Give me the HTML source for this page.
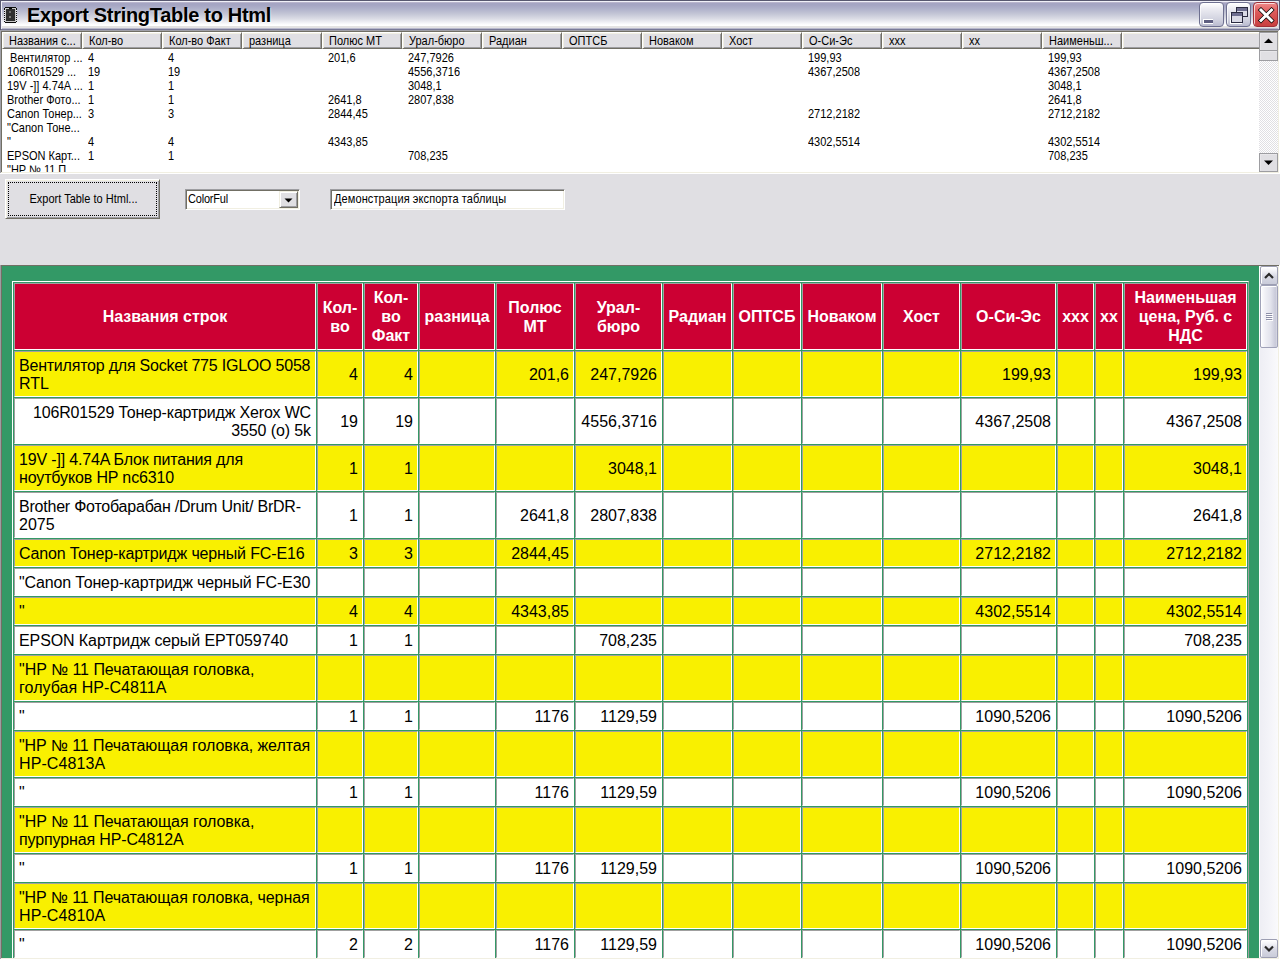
<!DOCTYPE html><html><head><meta charset="utf-8"><title>Export StringTable to Html</title><style>
*{box-sizing:border-box;margin:0;padding:0}
html,body{width:1280px;height:960px;overflow:hidden;background:#e0dfe3;font-family:"Liberation Sans",sans-serif;position:relative}
.a{position:absolute}
.t{font-size:11px;line-height:14px;color:#000;white-space:nowrap}
.lv{transform:scaleY(1.12);transform-origin:0 10px;margin-top:1px}
/* table */
.c{position:absolute;border-style:solid;border-width:1px;border-color:#a0a0a0 #ffffff #ffffff #a0a0a0;font-size:16px;line-height:18px;color:#000;white-space:nowrap;display:flex;align-items:center;padding:0 4px;}
.h{background:#cc0033;color:#fff;font-weight:bold;line-height:19px;justify-content:center;text-align:center}
.r{justify-content:flex-end;text-align:right}
</style></head><body>
<div class="a" style="left:0;top:0;width:1280px;height:30px;background:linear-gradient(#a5a5c3 0px,#a5a5c3 5px,#b0b2cb 9px,#c4c6d6 14px,#dcdde6 19px,#f4f4f8 23px,#ffffff 25px,#ffffff 26px,#e4e3e3 26px,#e4e3e3 28px,#b8b8cc 28px,#b8b8cc 29px,#7a7a98 29px);"></div>
<div class="a" style="left:0;top:0;width:1280px;height:1px;background:#585870"></div>
<div class="a" style="left:0;top:1px;width:1280px;height:1px;background:#f0f0f8"></div>
<div class="a" style="left:0;top:2px;width:1280px;height:1px;background:#b8b4cc"></div>
<div class="a" style="left:0;top:0;width:1px;height:30px;background:#585870"></div>
<div class="a" style="left:1px;top:1px;width:1px;height:28px;background:#f0f0f8"></div>
<div class="a" style="left:1279px;top:0;width:1px;height:30px;background:#585870"></div>
<div class="a" style="left:1278px;top:1px;width:1px;height:28px;background:#d8d8e4"></div>
<div class="a" style="left:4px;top:7px;width:13px;height:16px;"><svg width="13" height="16" viewBox="0 0 13 16"><path d="M1 0 H12 V1 H13 V15 H12 V16 H1 V15 H0 V1 H1 Z" fill="#0a0a0a"/><rect x="1" y="1" width="11" height="14" fill="#c8c8c8"/><rect x="2" y="2" width="9" height="12" fill="#2e2e2e"/><rect x="5" y="1" width="3" height="1" fill="#0a0a0a"/><rect x="5" y="4" width="2" height="2" fill="#6a6a6a"/><rect x="5" y="9" width="2" height="2" fill="#7a7a7a"/><rect x="0" y="3" width="1" height="1" fill="#e8e8f0"/><rect x="12" y="3" width="1" height="1" fill="#e8e8f0"/><rect x="0" y="5" width="1" height="1" fill="#e8e8f0"/><rect x="12" y="5" width="1" height="1" fill="#e8e8f0"/><rect x="0" y="7" width="1" height="1" fill="#e8e8f0"/><rect x="12" y="7" width="1" height="1" fill="#e8e8f0"/><rect x="0" y="9" width="1" height="1" fill="#e8e8f0"/><rect x="12" y="9" width="1" height="1" fill="#e8e8f0"/><rect x="0" y="11" width="1" height="1" fill="#e8e8f0"/><rect x="12" y="11" width="1" height="1" fill="#e8e8f0"/><rect x="0" y="13" width="1" height="1" fill="#e8e8f0"/><rect x="12" y="13" width="1" height="1" fill="#e8e8f0"/></svg></div>
<div class="a" style="left:27px;top:3px;font-size:20px;line-height:24px;font-weight:bold;color:#000;white-space:nowrap;letter-spacing:-0.3px;text-shadow:1px 1px 0 rgba(255,255,255,0.5)">Export StringTable to Html</div>
<div class="a" style="left:1199px;top:2px;width:25px;height:25px;border:1px solid #6e7090;border-radius:4px;background:linear-gradient(#ffffff,#ececf2 25%,#cfd0de 75%,#babbcf);overflow:hidden;box-shadow:inset 1px 1px 0 rgba(255,255,255,0.7)"><div class="a" style="left:3px;top:16px;width:10px;height:5px;background:#fff"></div><div class="a" style="left:4px;top:17px;width:9px;height:3px;background:#5e5e80"></div></div>
<div class="a" style="left:1226px;top:2px;width:25px;height:25px;border:1px solid #6e7090;border-radius:4px;background:linear-gradient(#ffffff,#ececf2 25%,#cfd0de 75%,#babbcf);overflow:hidden;box-shadow:inset 1px 1px 0 rgba(255,255,255,0.7)"><svg class="a" style="left:2px;top:2px" width="20" height="20"><rect x="7" y="2" width="12" height="10" fill="#2a2a40"/><rect x="8" y="5" width="10" height="6" fill="#dadae6"/><rect x="8" y="3" width="10" height="3" fill="#6e6e90"/><rect x="1" y="8" width="12" height="11" fill="#fff"/><rect x="2" y="7" width="12" height="11" fill="#2a2a40"/><rect x="3" y="10" width="10" height="7" fill="#dadae6"/><rect x="3" y="8" width="10" height="3" fill="#6e6e90"/></svg></div>
<div class="a" style="left:1253px;top:2px;width:25px;height:25px;border:1px solid #a03038;border-radius:4px;background:linear-gradient(#f08a8a,#dc5a5a 40%,#d04848 80%,#c84040);overflow:hidden;box-shadow:inset 1px 1px 0 rgba(255,255,255,0.7)"><svg class="a" style="left:2px;top:2px" width="20" height="20"><path d="M5 5 L15.5 15.5 M15.5 5 L5 15.5" stroke="#000" stroke-width="4.4" stroke-linecap="square"/><path d="M5 5 L15.5 15.5 M15.5 5 L5 15.5" stroke="#fff" stroke-width="3" stroke-linecap="square"/></svg></div>
<div class="a" style="left:0;top:30px;width:1280px;height:144px;background:#fff"></div>
<div class="a" style="left:0;top:30px;width:1280px;height:1px;background:#a0a0a8"></div>
<div class="a" style="left:1px;top:31px;width:1278px;height:1px;background:#716f64"></div>
<div class="a" style="left:0;top:30px;width:1px;height:144px;background:#a0a0a8"></div>
<div class="a" style="left:1px;top:31px;width:1px;height:142px;background:#716f64"></div>
<div class="a" style="left:0;top:173px;width:1280px;height:1px;background:#ffffff"></div>
<div class="a" style="left:1px;top:172px;width:1278px;height:1px;background:#f1efe2"></div>
<div class="a" style="left:1279px;top:30px;width:1px;height:144px;background:#fff"></div>
<div class="a" style="left:1278px;top:31px;width:1px;height:142px;background:#f1efe2"></div>
<div class="a" style="left:2px;top:32px;width:80px;height:17px;background:#e0dfe3;border-style:solid;border-width:1px 1px 1px 1px;border-color:#fff #716f64 #716f64 #fff;box-shadow:inset 1px 1px 0 #f1efe2, inset -1px -1px 0 #9d9da1"></div>
<div class="a t lv" style="left:9px;top:33px">Названия с...</div>
<div class="a" style="left:82px;top:32px;width:80px;height:17px;background:#e0dfe3;border-style:solid;border-width:1px 1px 1px 1px;border-color:#fff #716f64 #716f64 #fff;box-shadow:inset 1px 1px 0 #f1efe2, inset -1px -1px 0 #9d9da1"></div>
<div class="a t lv" style="left:89px;top:33px">Кол-во</div>
<div class="a" style="left:162px;top:32px;width:80px;height:17px;background:#e0dfe3;border-style:solid;border-width:1px 1px 1px 1px;border-color:#fff #716f64 #716f64 #fff;box-shadow:inset 1px 1px 0 #f1efe2, inset -1px -1px 0 #9d9da1"></div>
<div class="a t lv" style="left:169px;top:33px">Кол-во Факт</div>
<div class="a" style="left:242px;top:32px;width:80px;height:17px;background:#e0dfe3;border-style:solid;border-width:1px 1px 1px 1px;border-color:#fff #716f64 #716f64 #fff;box-shadow:inset 1px 1px 0 #f1efe2, inset -1px -1px 0 #9d9da1"></div>
<div class="a t lv" style="left:249px;top:33px">разница</div>
<div class="a" style="left:322px;top:32px;width:80px;height:17px;background:#e0dfe3;border-style:solid;border-width:1px 1px 1px 1px;border-color:#fff #716f64 #716f64 #fff;box-shadow:inset 1px 1px 0 #f1efe2, inset -1px -1px 0 #9d9da1"></div>
<div class="a t lv" style="left:329px;top:33px">Полюс МТ</div>
<div class="a" style="left:402px;top:32px;width:80px;height:17px;background:#e0dfe3;border-style:solid;border-width:1px 1px 1px 1px;border-color:#fff #716f64 #716f64 #fff;box-shadow:inset 1px 1px 0 #f1efe2, inset -1px -1px 0 #9d9da1"></div>
<div class="a t lv" style="left:409px;top:33px">Урал-бюро</div>
<div class="a" style="left:482px;top:32px;width:80px;height:17px;background:#e0dfe3;border-style:solid;border-width:1px 1px 1px 1px;border-color:#fff #716f64 #716f64 #fff;box-shadow:inset 1px 1px 0 #f1efe2, inset -1px -1px 0 #9d9da1"></div>
<div class="a t lv" style="left:489px;top:33px">Радиан</div>
<div class="a" style="left:562px;top:32px;width:80px;height:17px;background:#e0dfe3;border-style:solid;border-width:1px 1px 1px 1px;border-color:#fff #716f64 #716f64 #fff;box-shadow:inset 1px 1px 0 #f1efe2, inset -1px -1px 0 #9d9da1"></div>
<div class="a t lv" style="left:569px;top:33px">ОПТСБ</div>
<div class="a" style="left:642px;top:32px;width:80px;height:17px;background:#e0dfe3;border-style:solid;border-width:1px 1px 1px 1px;border-color:#fff #716f64 #716f64 #fff;box-shadow:inset 1px 1px 0 #f1efe2, inset -1px -1px 0 #9d9da1"></div>
<div class="a t lv" style="left:649px;top:33px">Новаком</div>
<div class="a" style="left:722px;top:32px;width:80px;height:17px;background:#e0dfe3;border-style:solid;border-width:1px 1px 1px 1px;border-color:#fff #716f64 #716f64 #fff;box-shadow:inset 1px 1px 0 #f1efe2, inset -1px -1px 0 #9d9da1"></div>
<div class="a t lv" style="left:729px;top:33px">Хост</div>
<div class="a" style="left:802px;top:32px;width:80px;height:17px;background:#e0dfe3;border-style:solid;border-width:1px 1px 1px 1px;border-color:#fff #716f64 #716f64 #fff;box-shadow:inset 1px 1px 0 #f1efe2, inset -1px -1px 0 #9d9da1"></div>
<div class="a t lv" style="left:809px;top:33px">О-Си-Эс</div>
<div class="a" style="left:882px;top:32px;width:80px;height:17px;background:#e0dfe3;border-style:solid;border-width:1px 1px 1px 1px;border-color:#fff #716f64 #716f64 #fff;box-shadow:inset 1px 1px 0 #f1efe2, inset -1px -1px 0 #9d9da1"></div>
<div class="a t lv" style="left:889px;top:33px">xxx</div>
<div class="a" style="left:962px;top:32px;width:80px;height:17px;background:#e0dfe3;border-style:solid;border-width:1px 1px 1px 1px;border-color:#fff #716f64 #716f64 #fff;box-shadow:inset 1px 1px 0 #f1efe2, inset -1px -1px 0 #9d9da1"></div>
<div class="a t lv" style="left:969px;top:33px">xx</div>
<div class="a" style="left:1042px;top:32px;width:80px;height:17px;background:#e0dfe3;border-style:solid;border-width:1px 1px 1px 1px;border-color:#fff #716f64 #716f64 #fff;box-shadow:inset 1px 1px 0 #f1efe2, inset -1px -1px 0 #9d9da1"></div>
<div class="a t lv" style="left:1049px;top:33px">Наименьш...</div>
<div class="a" style="left:1122px;top:32px;width:140px;height:17px;background:#e0dfe3;border-style:solid;border-width:1px 1px 1px 1px;border-color:#fff #716f64 #716f64 #fff;box-shadow:inset 1px 1px 0 #f1efe2, inset -1px -1px 0 #9d9da1"></div>
<div class="a" style="left:2px;top:49px;width:1257px;height:123px;overflow:hidden">
<div class="a t lv" style="left:5px;top:1px;white-space:pre"> Вентилятор ...</div>
<div class="a t lv" style="left:86px;top:1px;white-space:pre">4</div>
<div class="a t lv" style="left:166px;top:1px;white-space:pre">4</div>
<div class="a t lv" style="left:326px;top:1px;white-space:pre">201,6</div>
<div class="a t lv" style="left:406px;top:1px;white-space:pre">247,7926</div>
<div class="a t lv" style="left:806px;top:1px;white-space:pre">199,93</div>
<div class="a t lv" style="left:1046px;top:1px;white-space:pre">199,93</div>
<div class="a t lv" style="left:5px;top:15px;white-space:pre">106R01529 ...</div>
<div class="a t lv" style="left:86px;top:15px;white-space:pre">19</div>
<div class="a t lv" style="left:166px;top:15px;white-space:pre">19</div>
<div class="a t lv" style="left:406px;top:15px;white-space:pre">4556,3716</div>
<div class="a t lv" style="left:806px;top:15px;white-space:pre">4367,2508</div>
<div class="a t lv" style="left:1046px;top:15px;white-space:pre">4367,2508</div>
<div class="a t lv" style="left:5px;top:29px;white-space:pre">19V -]] 4.74A ...</div>
<div class="a t lv" style="left:86px;top:29px;white-space:pre">1</div>
<div class="a t lv" style="left:166px;top:29px;white-space:pre">1</div>
<div class="a t lv" style="left:406px;top:29px;white-space:pre">3048,1</div>
<div class="a t lv" style="left:1046px;top:29px;white-space:pre">3048,1</div>
<div class="a t lv" style="left:5px;top:43px;white-space:pre">Brother Фото...</div>
<div class="a t lv" style="left:86px;top:43px;white-space:pre">1</div>
<div class="a t lv" style="left:166px;top:43px;white-space:pre">1</div>
<div class="a t lv" style="left:326px;top:43px;white-space:pre">2641,8</div>
<div class="a t lv" style="left:406px;top:43px;white-space:pre">2807,838</div>
<div class="a t lv" style="left:1046px;top:43px;white-space:pre">2641,8</div>
<div class="a t lv" style="left:5px;top:57px;white-space:pre">Canon Тонер...</div>
<div class="a t lv" style="left:86px;top:57px;white-space:pre">3</div>
<div class="a t lv" style="left:166px;top:57px;white-space:pre">3</div>
<div class="a t lv" style="left:326px;top:57px;white-space:pre">2844,45</div>
<div class="a t lv" style="left:806px;top:57px;white-space:pre">2712,2182</div>
<div class="a t lv" style="left:1046px;top:57px;white-space:pre">2712,2182</div>
<div class="a t lv" style="left:5px;top:71px;white-space:pre">&quot;Canon Тоне...</div>
<div class="a t lv" style="left:5px;top:85px;white-space:pre">&quot;</div>
<div class="a t lv" style="left:86px;top:85px;white-space:pre">4</div>
<div class="a t lv" style="left:166px;top:85px;white-space:pre">4</div>
<div class="a t lv" style="left:326px;top:85px;white-space:pre">4343,85</div>
<div class="a t lv" style="left:806px;top:85px;white-space:pre">4302,5514</div>
<div class="a t lv" style="left:1046px;top:85px;white-space:pre">4302,5514</div>
<div class="a t lv" style="left:5px;top:99px;white-space:pre">EPSON Карт...</div>
<div class="a t lv" style="left:86px;top:99px;white-space:pre">1</div>
<div class="a t lv" style="left:166px;top:99px;white-space:pre">1</div>
<div class="a t lv" style="left:406px;top:99px;white-space:pre">708,235</div>
<div class="a t lv" style="left:1046px;top:99px;white-space:pre">708,235</div>
<div class="a t lv" style="left:5px;top:113px;white-space:pre">&quot;HP № 11 П</div>
</div>
<div class="a" style="left:1259px;top:32px;width:19px;height:140px;background-color:#f4f3ee;background-image:repeating-conic-gradient(#e0dfe3 0 25%, #ffffff 0 50%);background-size:2px 2px"></div>
<div class="a" style="left:1259px;top:32px;width:19px;height:19px;background:#e0dfe3;border:1px solid #9d9da1;box-shadow:inset 1px 1px 0 #e8e7ea"><svg class="a" style="left:4px;top:5px" width="9" height="6"><path d="M0 5 L4.5 0.5 L9 5 Z" fill="#000"/></svg></div>
<div class="a" style="left:1259px;top:50px;width:19px;height:11px;background:#e0dfe3;border:1px solid #9d9da1;box-shadow:inset 1px 1px 0 #e8e7ea"></div>
<div class="a" style="left:1259px;top:153px;width:19px;height:19px;background:#e0dfe3;border:1px solid #9d9da1;box-shadow:inset 1px 1px 0 #e8e7ea"><svg class="a" style="left:4px;top:6px" width="9" height="6"><path d="M0 0.5 L4.5 5 L9 0.5 Z" fill="#000"/></svg></div>
<div class="a" style="left:5px;top:179px;width:155px;height:40px;background:#e0dfe3;border-style:solid;border-width:1px;border-color:#fff #716f64 #716f64 #fff;box-shadow:inset 1px 1px 0 #f1efe2, inset -1px -1px 0 #9d9da1"></div>
<div class="a" style="left:8px;top:182px;width:149px;height:34px;border:1px dotted #000"></div>
<div class="a t lv" style="left:6px;top:192px;width:155px;text-align:center;margin-top:0">Export Table to Html...</div>
<div class="a" style="left:185px;top:189px;width:115px;height:21px;background:#fff;border-style:solid;border-width:1px;border-color:#9d9da1 #fff #fff #9d9da1;box-shadow:inset 1px 1px 0 #716f64, inset -1px -1px 0 #f1efe2"></div>
<div class="a t lv" style="left:188px;top:192px;margin-top:0;letter-spacing:-0.2px">ColorFul</div>
<div class="a" style="left:279px;top:191px;width:19px;height:17px;background:#e0dfe3;border-style:solid;border-width:1px;border-color:#f1efe2 #716f64 #716f64 #f1efe2;box-shadow:inset 1px 1px 0 #fff, inset -1px -1px 0 #9d9da1"><svg class="a" style="left:4px;top:6px" width="9" height="6"><path d="M0.5 0.5 L4.5 4.5 L8.5 0.5 Z" fill="#000"/></svg></div>
<div class="a" style="left:330px;top:189px;width:235px;height:21px;background:#fff;border-style:solid;border-width:1px;border-color:#9d9da1 #fff #fff #9d9da1;box-shadow:inset 1px 1px 0 #716f64, inset -1px -1px 0 #f1efe2"></div>
<div class="a t lv" style="left:334px;top:192px;margin-top:0;letter-spacing:0.1px">Демонстрация экспорта таблицы</div>
<div class="a" style="left:0;top:265px;width:1279px;height:1px;background:#716f64"></div>
<div class="a" style="left:0;top:265px;width:1px;height:695px;background:#9d9da1"></div>
<div class="a" style="left:1px;top:266px;width:1px;height:692px;background:#716f64"></div>
<div class="a" style="left:2px;top:266px;width:1257px;height:692px;background:#339966"></div>
<div class="a" style="left:1px;top:958px;width:1278px;height:1px;background:#f1efe2"></div>
<div class="a" style="left:0;top:959px;width:1280px;height:1px;background:#ffffff"></div>
<div class="a" style="left:1278px;top:266px;width:1px;height:693px;background:#f1efe2"></div>
<div class="a" style="left:1279px;top:265px;width:1px;height:695px;background:#ffffff"></div>
<div class="a" style="left:1259px;top:266px;width:19px;height:692px;background:linear-gradient(90deg,#fdfdfd 0,#fdfdfd 1px,#eeeef4 1px,#f3f3f8 50%,#fafafc)"></div>
<div class="a" style="left:1260px;top:266px;width:18px;height:19px;border:1px solid #9c9eb2;border-radius:2px;background:linear-gradient(#ffffff,#f4f4f8 20%,#d8d9e4 55%,#c9cbd9);box-shadow:inset 1px 1px 0 #fff"><svg class="a" style="left:3px;top:5px" width="10" height="8"><path d="M1 6 L5 2 L9 6" stroke="#2a2a2a" stroke-width="2.2" fill="none"/></svg></div>
<div class="a" style="left:1260px;top:285px;width:18px;height:63px;border:1px solid #a0a2b8;border-radius:2px;background:linear-gradient(90deg,#fdfdfe,#eeeef4 30%,#e2e3ec 60%,#c9cad9 90%,#d8d9e4);box-shadow:inset 1px 1px 0 #fff"><div class="a" style="left:5px;top:27px;width:6px;height:1px;background:#8e90a8;box-shadow:0 2px 0 #8e90a8,0 4px 0 #8e90a8,0 6px 0 #8e90a8, 1px 1px 0 #fff,1px 3px 0 #fff,1px 5px 0 #fff,1px 7px 0 #fff"></div></div>
<div class="a" style="left:1260px;top:939px;width:18px;height:19px;border:1px solid #9c9eb2;border-radius:2px;background:linear-gradient(#ffffff,#f4f4f8 20%,#d8d9e4 55%,#c9cbd9);box-shadow:inset 1px 1px 0 #fff"><svg class="a" style="left:3px;top:5px" width="10" height="8"><path d="M1 1.5 L5 5.5 L9 1.5" stroke="#2a2a2a" stroke-width="2.2" fill="none"/></svg></div>
<div class="a" style="left:2px;top:266px;width:1257px;height:692px;overflow:hidden">
<div class="a" style="left:10px;top:15px;width:1237px;height:1000px;border-style:solid;border-width:1px;border-color:#fff #a0a0a0 #a0a0a0 #fff"></div>
<div class="c h" style="left:12px;top:17px;width:302px;height:67px;"><div>Названия строк</div></div>
<div class="c h" style="left:315px;top:17px;width:46px;height:67px;"><div>Кол-<br>во</div></div>
<div class="c h" style="left:362px;top:17px;width:54px;height:67px;"><div>Кол-<br>во<br>Факт</div></div>
<div class="c h" style="left:417px;top:17px;width:76px;height:67px;"><div>разница</div></div>
<div class="c h" style="left:494px;top:17px;width:78px;height:67px;"><div>Полюс<br>МТ</div></div>
<div class="c h" style="left:573px;top:17px;width:87px;height:67px;"><div>Урал-<br>бюро</div></div>
<div class="c h" style="left:661px;top:17px;width:69px;height:67px;"><div>Радиан</div></div>
<div class="c h" style="left:731px;top:17px;width:68px;height:67px;"><div>ОПТСБ</div></div>
<div class="c h" style="left:800px;top:17px;width:80px;height:67px;"><div>Новаком</div></div>
<div class="c h" style="left:881px;top:17px;width:77px;height:67px;"><div>Хост</div></div>
<div class="c h" style="left:959px;top:17px;width:95px;height:67px;"><div>О-Си-Эс</div></div>
<div class="c h" style="left:1055px;top:17px;width:37px;height:67px;"><div>xxx</div></div>
<div class="c h" style="left:1093px;top:17px;width:28px;height:67px;"><div>xx</div></div>
<div class="c h" style="left:1122px;top:17px;width:123px;height:67px;"><div>Наименьшая<br>цена, Руб. с<br>НДС</div></div>
<div class="c " style="left:12px;top:85px;width:302px;height:46px;background:#f9f000;"><div style="position:relative;top:1px"><span style="letter-spacing:-0.217px">Вентилятор для Socket 775 IGLOO 5058</span><br>RTL</div></div>
<div class="c r" style="left:315px;top:85px;width:46px;height:46px;background:#f9f000;"><div style="position:relative;top:1px">4</div></div>
<div class="c r" style="left:362px;top:85px;width:54px;height:46px;background:#f9f000;"><div style="position:relative;top:1px">4</div></div>
<div class="c r" style="left:417px;top:85px;width:76px;height:46px;background:#f9f000;"><div style="position:relative;top:1px"></div></div>
<div class="c r" style="left:494px;top:85px;width:78px;height:46px;background:#f9f000;"><div style="position:relative;top:1px">201,6</div></div>
<div class="c r" style="left:573px;top:85px;width:87px;height:46px;background:#f9f000;"><div style="position:relative;top:1px">247,7926</div></div>
<div class="c r" style="left:661px;top:85px;width:69px;height:46px;background:#f9f000;"><div style="position:relative;top:1px"></div></div>
<div class="c r" style="left:731px;top:85px;width:68px;height:46px;background:#f9f000;"><div style="position:relative;top:1px"></div></div>
<div class="c r" style="left:800px;top:85px;width:80px;height:46px;background:#f9f000;"><div style="position:relative;top:1px"></div></div>
<div class="c r" style="left:881px;top:85px;width:77px;height:46px;background:#f9f000;"><div style="position:relative;top:1px"></div></div>
<div class="c r" style="left:959px;top:85px;width:95px;height:46px;background:#f9f000;"><div style="position:relative;top:1px">199,93</div></div>
<div class="c r" style="left:1055px;top:85px;width:37px;height:46px;background:#f9f000;"><div style="position:relative;top:1px"></div></div>
<div class="c r" style="left:1093px;top:85px;width:28px;height:46px;background:#f9f000;"><div style="position:relative;top:1px"></div></div>
<div class="c r" style="left:1122px;top:85px;width:123px;height:46px;background:#f9f000;"><div style="position:relative;top:1px">199,93</div></div>
<div class="c r" style="left:12px;top:132px;width:302px;height:46px;background:#ffffff;"><div style="position:relative;top:1px"><span style="letter-spacing:-0.180px">106R01529 Тонер-картридж Xerox WC</span><br><span style="letter-spacing:-0.100px">3550 (o) 5k</span></div></div>
<div class="c r" style="left:315px;top:132px;width:46px;height:46px;background:#ffffff;"><div style="position:relative;top:1px">19</div></div>
<div class="c r" style="left:362px;top:132px;width:54px;height:46px;background:#ffffff;"><div style="position:relative;top:1px">19</div></div>
<div class="c r" style="left:417px;top:132px;width:76px;height:46px;background:#ffffff;"><div style="position:relative;top:1px"></div></div>
<div class="c r" style="left:494px;top:132px;width:78px;height:46px;background:#ffffff;"><div style="position:relative;top:1px"></div></div>
<div class="c r" style="left:573px;top:132px;width:87px;height:46px;background:#ffffff;"><div style="position:relative;top:1px">4556,3716</div></div>
<div class="c r" style="left:661px;top:132px;width:69px;height:46px;background:#ffffff;"><div style="position:relative;top:1px"></div></div>
<div class="c r" style="left:731px;top:132px;width:68px;height:46px;background:#ffffff;"><div style="position:relative;top:1px"></div></div>
<div class="c r" style="left:800px;top:132px;width:80px;height:46px;background:#ffffff;"><div style="position:relative;top:1px"></div></div>
<div class="c r" style="left:881px;top:132px;width:77px;height:46px;background:#ffffff;"><div style="position:relative;top:1px"></div></div>
<div class="c r" style="left:959px;top:132px;width:95px;height:46px;background:#ffffff;"><div style="position:relative;top:1px">4367,2508</div></div>
<div class="c r" style="left:1055px;top:132px;width:37px;height:46px;background:#ffffff;"><div style="position:relative;top:1px"></div></div>
<div class="c r" style="left:1093px;top:132px;width:28px;height:46px;background:#ffffff;"><div style="position:relative;top:1px"></div></div>
<div class="c r" style="left:1122px;top:132px;width:123px;height:46px;background:#ffffff;"><div style="position:relative;top:1px">4367,2508</div></div>
<div class="c " style="left:12px;top:179px;width:302px;height:46px;background:#f9f000;"><div style="position:relative;top:1px"><span style="letter-spacing:-0.169px">19V -]] 4.74A Блок питания для</span><br><span style="letter-spacing:-0.133px">ноутбуков HP nc6310</span></div></div>
<div class="c r" style="left:315px;top:179px;width:46px;height:46px;background:#f9f000;"><div style="position:relative;top:1px">1</div></div>
<div class="c r" style="left:362px;top:179px;width:54px;height:46px;background:#f9f000;"><div style="position:relative;top:1px">1</div></div>
<div class="c r" style="left:417px;top:179px;width:76px;height:46px;background:#f9f000;"><div style="position:relative;top:1px"></div></div>
<div class="c r" style="left:494px;top:179px;width:78px;height:46px;background:#f9f000;"><div style="position:relative;top:1px"></div></div>
<div class="c r" style="left:573px;top:179px;width:87px;height:46px;background:#f9f000;"><div style="position:relative;top:1px">3048,1</div></div>
<div class="c r" style="left:661px;top:179px;width:69px;height:46px;background:#f9f000;"><div style="position:relative;top:1px"></div></div>
<div class="c r" style="left:731px;top:179px;width:68px;height:46px;background:#f9f000;"><div style="position:relative;top:1px"></div></div>
<div class="c r" style="left:800px;top:179px;width:80px;height:46px;background:#f9f000;"><div style="position:relative;top:1px"></div></div>
<div class="c r" style="left:881px;top:179px;width:77px;height:46px;background:#f9f000;"><div style="position:relative;top:1px"></div></div>
<div class="c r" style="left:959px;top:179px;width:95px;height:46px;background:#f9f000;"><div style="position:relative;top:1px"></div></div>
<div class="c r" style="left:1055px;top:179px;width:37px;height:46px;background:#f9f000;"><div style="position:relative;top:1px"></div></div>
<div class="c r" style="left:1093px;top:179px;width:28px;height:46px;background:#f9f000;"><div style="position:relative;top:1px"></div></div>
<div class="c r" style="left:1122px;top:179px;width:123px;height:46px;background:#f9f000;"><div style="position:relative;top:1px">3048,1</div></div>
<div class="c " style="left:12px;top:226px;width:302px;height:46px;background:#ffffff;"><div style="position:relative;top:1px"><span style="letter-spacing:-0.219px">Brother Фотобарабан /Drum Unit/ BrDR-</span><br>2075</div></div>
<div class="c r" style="left:315px;top:226px;width:46px;height:46px;background:#ffffff;"><div style="position:relative;top:1px">1</div></div>
<div class="c r" style="left:362px;top:226px;width:54px;height:46px;background:#ffffff;"><div style="position:relative;top:1px">1</div></div>
<div class="c r" style="left:417px;top:226px;width:76px;height:46px;background:#ffffff;"><div style="position:relative;top:1px"></div></div>
<div class="c r" style="left:494px;top:226px;width:78px;height:46px;background:#ffffff;"><div style="position:relative;top:1px">2641,8</div></div>
<div class="c r" style="left:573px;top:226px;width:87px;height:46px;background:#ffffff;"><div style="position:relative;top:1px">2807,838</div></div>
<div class="c r" style="left:661px;top:226px;width:69px;height:46px;background:#ffffff;"><div style="position:relative;top:1px"></div></div>
<div class="c r" style="left:731px;top:226px;width:68px;height:46px;background:#ffffff;"><div style="position:relative;top:1px"></div></div>
<div class="c r" style="left:800px;top:226px;width:80px;height:46px;background:#ffffff;"><div style="position:relative;top:1px"></div></div>
<div class="c r" style="left:881px;top:226px;width:77px;height:46px;background:#ffffff;"><div style="position:relative;top:1px"></div></div>
<div class="c r" style="left:959px;top:226px;width:95px;height:46px;background:#ffffff;"><div style="position:relative;top:1px"></div></div>
<div class="c r" style="left:1055px;top:226px;width:37px;height:46px;background:#ffffff;"><div style="position:relative;top:1px"></div></div>
<div class="c r" style="left:1093px;top:226px;width:28px;height:46px;background:#ffffff;"><div style="position:relative;top:1px"></div></div>
<div class="c r" style="left:1122px;top:226px;width:123px;height:46px;background:#ffffff;"><div style="position:relative;top:1px">2641,8</div></div>
<div class="c " style="left:12px;top:273px;width:302px;height:28px;background:#f9f000;"><div style="position:relative;top:1px"><span style="letter-spacing:-0.145px">Canon Тонер-картридж черный FC-E16</span></div></div>
<div class="c r" style="left:315px;top:273px;width:46px;height:28px;background:#f9f000;"><div style="position:relative;top:1px">3</div></div>
<div class="c r" style="left:362px;top:273px;width:54px;height:28px;background:#f9f000;"><div style="position:relative;top:1px">3</div></div>
<div class="c r" style="left:417px;top:273px;width:76px;height:28px;background:#f9f000;"><div style="position:relative;top:1px"></div></div>
<div class="c r" style="left:494px;top:273px;width:78px;height:28px;background:#f9f000;"><div style="position:relative;top:1px">2844,45</div></div>
<div class="c r" style="left:573px;top:273px;width:87px;height:28px;background:#f9f000;"><div style="position:relative;top:1px"></div></div>
<div class="c r" style="left:661px;top:273px;width:69px;height:28px;background:#f9f000;"><div style="position:relative;top:1px"></div></div>
<div class="c r" style="left:731px;top:273px;width:68px;height:28px;background:#f9f000;"><div style="position:relative;top:1px"></div></div>
<div class="c r" style="left:800px;top:273px;width:80px;height:28px;background:#f9f000;"><div style="position:relative;top:1px"></div></div>
<div class="c r" style="left:881px;top:273px;width:77px;height:28px;background:#f9f000;"><div style="position:relative;top:1px"></div></div>
<div class="c r" style="left:959px;top:273px;width:95px;height:28px;background:#f9f000;"><div style="position:relative;top:1px">2712,2182</div></div>
<div class="c r" style="left:1055px;top:273px;width:37px;height:28px;background:#f9f000;"><div style="position:relative;top:1px"></div></div>
<div class="c r" style="left:1093px;top:273px;width:28px;height:28px;background:#f9f000;"><div style="position:relative;top:1px"></div></div>
<div class="c r" style="left:1122px;top:273px;width:123px;height:28px;background:#f9f000;"><div style="position:relative;top:1px">2712,2182</div></div>
<div class="c " style="left:12px;top:302px;width:302px;height:28px;background:#ffffff;"><div style="position:relative;top:1px"><span style="letter-spacing:-0.141px">"Canon Тонер-картридж черный FC-E30</span></div></div>
<div class="c r" style="left:315px;top:302px;width:46px;height:28px;background:#ffffff;"><div style="position:relative;top:1px"></div></div>
<div class="c r" style="left:362px;top:302px;width:54px;height:28px;background:#ffffff;"><div style="position:relative;top:1px"></div></div>
<div class="c r" style="left:417px;top:302px;width:76px;height:28px;background:#ffffff;"><div style="position:relative;top:1px"></div></div>
<div class="c r" style="left:494px;top:302px;width:78px;height:28px;background:#ffffff;"><div style="position:relative;top:1px"></div></div>
<div class="c r" style="left:573px;top:302px;width:87px;height:28px;background:#ffffff;"><div style="position:relative;top:1px"></div></div>
<div class="c r" style="left:661px;top:302px;width:69px;height:28px;background:#ffffff;"><div style="position:relative;top:1px"></div></div>
<div class="c r" style="left:731px;top:302px;width:68px;height:28px;background:#ffffff;"><div style="position:relative;top:1px"></div></div>
<div class="c r" style="left:800px;top:302px;width:80px;height:28px;background:#ffffff;"><div style="position:relative;top:1px"></div></div>
<div class="c r" style="left:881px;top:302px;width:77px;height:28px;background:#ffffff;"><div style="position:relative;top:1px"></div></div>
<div class="c r" style="left:959px;top:302px;width:95px;height:28px;background:#ffffff;"><div style="position:relative;top:1px"></div></div>
<div class="c r" style="left:1055px;top:302px;width:37px;height:28px;background:#ffffff;"><div style="position:relative;top:1px"></div></div>
<div class="c r" style="left:1093px;top:302px;width:28px;height:28px;background:#ffffff;"><div style="position:relative;top:1px"></div></div>
<div class="c r" style="left:1122px;top:302px;width:123px;height:28px;background:#ffffff;"><div style="position:relative;top:1px"></div></div>
<div class="c " style="left:12px;top:331px;width:302px;height:28px;background:#f9f000;"><div style="position:relative;top:1px">"</div></div>
<div class="c r" style="left:315px;top:331px;width:46px;height:28px;background:#f9f000;"><div style="position:relative;top:1px">4</div></div>
<div class="c r" style="left:362px;top:331px;width:54px;height:28px;background:#f9f000;"><div style="position:relative;top:1px">4</div></div>
<div class="c r" style="left:417px;top:331px;width:76px;height:28px;background:#f9f000;"><div style="position:relative;top:1px"></div></div>
<div class="c r" style="left:494px;top:331px;width:78px;height:28px;background:#f9f000;"><div style="position:relative;top:1px">4343,85</div></div>
<div class="c r" style="left:573px;top:331px;width:87px;height:28px;background:#f9f000;"><div style="position:relative;top:1px"></div></div>
<div class="c r" style="left:661px;top:331px;width:69px;height:28px;background:#f9f000;"><div style="position:relative;top:1px"></div></div>
<div class="c r" style="left:731px;top:331px;width:68px;height:28px;background:#f9f000;"><div style="position:relative;top:1px"></div></div>
<div class="c r" style="left:800px;top:331px;width:80px;height:28px;background:#f9f000;"><div style="position:relative;top:1px"></div></div>
<div class="c r" style="left:881px;top:331px;width:77px;height:28px;background:#f9f000;"><div style="position:relative;top:1px"></div></div>
<div class="c r" style="left:959px;top:331px;width:95px;height:28px;background:#f9f000;"><div style="position:relative;top:1px">4302,5514</div></div>
<div class="c r" style="left:1055px;top:331px;width:37px;height:28px;background:#f9f000;"><div style="position:relative;top:1px"></div></div>
<div class="c r" style="left:1093px;top:331px;width:28px;height:28px;background:#f9f000;"><div style="position:relative;top:1px"></div></div>
<div class="c r" style="left:1122px;top:331px;width:123px;height:28px;background:#f9f000;"><div style="position:relative;top:1px">4302,5514</div></div>
<div class="c " style="left:12px;top:360px;width:302px;height:28px;background:#ffffff;"><div style="position:relative;top:1px"><span style="letter-spacing:-0.100px">EPSON Картридж серый EPT059740</span></div></div>
<div class="c r" style="left:315px;top:360px;width:46px;height:28px;background:#ffffff;"><div style="position:relative;top:1px">1</div></div>
<div class="c r" style="left:362px;top:360px;width:54px;height:28px;background:#ffffff;"><div style="position:relative;top:1px">1</div></div>
<div class="c r" style="left:417px;top:360px;width:76px;height:28px;background:#ffffff;"><div style="position:relative;top:1px"></div></div>
<div class="c r" style="left:494px;top:360px;width:78px;height:28px;background:#ffffff;"><div style="position:relative;top:1px"></div></div>
<div class="c r" style="left:573px;top:360px;width:87px;height:28px;background:#ffffff;"><div style="position:relative;top:1px">708,235</div></div>
<div class="c r" style="left:661px;top:360px;width:69px;height:28px;background:#ffffff;"><div style="position:relative;top:1px"></div></div>
<div class="c r" style="left:731px;top:360px;width:68px;height:28px;background:#ffffff;"><div style="position:relative;top:1px"></div></div>
<div class="c r" style="left:800px;top:360px;width:80px;height:28px;background:#ffffff;"><div style="position:relative;top:1px"></div></div>
<div class="c r" style="left:881px;top:360px;width:77px;height:28px;background:#ffffff;"><div style="position:relative;top:1px"></div></div>
<div class="c r" style="left:959px;top:360px;width:95px;height:28px;background:#ffffff;"><div style="position:relative;top:1px"></div></div>
<div class="c r" style="left:1055px;top:360px;width:37px;height:28px;background:#ffffff;"><div style="position:relative;top:1px"></div></div>
<div class="c r" style="left:1093px;top:360px;width:28px;height:28px;background:#ffffff;"><div style="position:relative;top:1px"></div></div>
<div class="c r" style="left:1122px;top:360px;width:123px;height:28px;background:#ffffff;"><div style="position:relative;top:1px">708,235</div></div>
<div class="c " style="left:12px;top:389px;width:302px;height:46px;background:#f9f000;"><div style="position:relative;top:1px"><span style="letter-spacing:-0.037px">"HP № 11 Печатающая головка,</span><br><span style="letter-spacing:0.050px">голубая HP-C4811A</span></div></div>
<div class="c r" style="left:315px;top:389px;width:46px;height:46px;background:#f9f000;"><div style="position:relative;top:1px"></div></div>
<div class="c r" style="left:362px;top:389px;width:54px;height:46px;background:#f9f000;"><div style="position:relative;top:1px"></div></div>
<div class="c r" style="left:417px;top:389px;width:76px;height:46px;background:#f9f000;"><div style="position:relative;top:1px"></div></div>
<div class="c r" style="left:494px;top:389px;width:78px;height:46px;background:#f9f000;"><div style="position:relative;top:1px"></div></div>
<div class="c r" style="left:573px;top:389px;width:87px;height:46px;background:#f9f000;"><div style="position:relative;top:1px"></div></div>
<div class="c r" style="left:661px;top:389px;width:69px;height:46px;background:#f9f000;"><div style="position:relative;top:1px"></div></div>
<div class="c r" style="left:731px;top:389px;width:68px;height:46px;background:#f9f000;"><div style="position:relative;top:1px"></div></div>
<div class="c r" style="left:800px;top:389px;width:80px;height:46px;background:#f9f000;"><div style="position:relative;top:1px"></div></div>
<div class="c r" style="left:881px;top:389px;width:77px;height:46px;background:#f9f000;"><div style="position:relative;top:1px"></div></div>
<div class="c r" style="left:959px;top:389px;width:95px;height:46px;background:#f9f000;"><div style="position:relative;top:1px"></div></div>
<div class="c r" style="left:1055px;top:389px;width:37px;height:46px;background:#f9f000;"><div style="position:relative;top:1px"></div></div>
<div class="c r" style="left:1093px;top:389px;width:28px;height:46px;background:#f9f000;"><div style="position:relative;top:1px"></div></div>
<div class="c r" style="left:1122px;top:389px;width:123px;height:46px;background:#f9f000;"><div style="position:relative;top:1px"></div></div>
<div class="c " style="left:12px;top:436px;width:302px;height:28px;background:#ffffff;"><div style="position:relative;top:1px">"</div></div>
<div class="c r" style="left:315px;top:436px;width:46px;height:28px;background:#ffffff;"><div style="position:relative;top:1px">1</div></div>
<div class="c r" style="left:362px;top:436px;width:54px;height:28px;background:#ffffff;"><div style="position:relative;top:1px">1</div></div>
<div class="c r" style="left:417px;top:436px;width:76px;height:28px;background:#ffffff;"><div style="position:relative;top:1px"></div></div>
<div class="c r" style="left:494px;top:436px;width:78px;height:28px;background:#ffffff;"><div style="position:relative;top:1px">1176</div></div>
<div class="c r" style="left:573px;top:436px;width:87px;height:28px;background:#ffffff;"><div style="position:relative;top:1px">1129,59</div></div>
<div class="c r" style="left:661px;top:436px;width:69px;height:28px;background:#ffffff;"><div style="position:relative;top:1px"></div></div>
<div class="c r" style="left:731px;top:436px;width:68px;height:28px;background:#ffffff;"><div style="position:relative;top:1px"></div></div>
<div class="c r" style="left:800px;top:436px;width:80px;height:28px;background:#ffffff;"><div style="position:relative;top:1px"></div></div>
<div class="c r" style="left:881px;top:436px;width:77px;height:28px;background:#ffffff;"><div style="position:relative;top:1px"></div></div>
<div class="c r" style="left:959px;top:436px;width:95px;height:28px;background:#ffffff;"><div style="position:relative;top:1px">1090,5206</div></div>
<div class="c r" style="left:1055px;top:436px;width:37px;height:28px;background:#ffffff;"><div style="position:relative;top:1px"></div></div>
<div class="c r" style="left:1093px;top:436px;width:28px;height:28px;background:#ffffff;"><div style="position:relative;top:1px"></div></div>
<div class="c r" style="left:1122px;top:436px;width:123px;height:28px;background:#ffffff;"><div style="position:relative;top:1px">1090,5206</div></div>
<div class="c " style="left:12px;top:465px;width:302px;height:46px;background:#f9f000;"><div style="position:relative;top:1px"><span style="letter-spacing:-0.079px">"HP № 11 Печатающая головка, желтая</span><br><span style="letter-spacing:0.100px">HP-C4813A</span></div></div>
<div class="c r" style="left:315px;top:465px;width:46px;height:46px;background:#f9f000;"><div style="position:relative;top:1px"></div></div>
<div class="c r" style="left:362px;top:465px;width:54px;height:46px;background:#f9f000;"><div style="position:relative;top:1px"></div></div>
<div class="c r" style="left:417px;top:465px;width:76px;height:46px;background:#f9f000;"><div style="position:relative;top:1px"></div></div>
<div class="c r" style="left:494px;top:465px;width:78px;height:46px;background:#f9f000;"><div style="position:relative;top:1px"></div></div>
<div class="c r" style="left:573px;top:465px;width:87px;height:46px;background:#f9f000;"><div style="position:relative;top:1px"></div></div>
<div class="c r" style="left:661px;top:465px;width:69px;height:46px;background:#f9f000;"><div style="position:relative;top:1px"></div></div>
<div class="c r" style="left:731px;top:465px;width:68px;height:46px;background:#f9f000;"><div style="position:relative;top:1px"></div></div>
<div class="c r" style="left:800px;top:465px;width:80px;height:46px;background:#f9f000;"><div style="position:relative;top:1px"></div></div>
<div class="c r" style="left:881px;top:465px;width:77px;height:46px;background:#f9f000;"><div style="position:relative;top:1px"></div></div>
<div class="c r" style="left:959px;top:465px;width:95px;height:46px;background:#f9f000;"><div style="position:relative;top:1px"></div></div>
<div class="c r" style="left:1055px;top:465px;width:37px;height:46px;background:#f9f000;"><div style="position:relative;top:1px"></div></div>
<div class="c r" style="left:1093px;top:465px;width:28px;height:46px;background:#f9f000;"><div style="position:relative;top:1px"></div></div>
<div class="c r" style="left:1122px;top:465px;width:123px;height:46px;background:#f9f000;"><div style="position:relative;top:1px"></div></div>
<div class="c " style="left:12px;top:512px;width:302px;height:28px;background:#ffffff;"><div style="position:relative;top:1px">"</div></div>
<div class="c r" style="left:315px;top:512px;width:46px;height:28px;background:#ffffff;"><div style="position:relative;top:1px">1</div></div>
<div class="c r" style="left:362px;top:512px;width:54px;height:28px;background:#ffffff;"><div style="position:relative;top:1px">1</div></div>
<div class="c r" style="left:417px;top:512px;width:76px;height:28px;background:#ffffff;"><div style="position:relative;top:1px"></div></div>
<div class="c r" style="left:494px;top:512px;width:78px;height:28px;background:#ffffff;"><div style="position:relative;top:1px">1176</div></div>
<div class="c r" style="left:573px;top:512px;width:87px;height:28px;background:#ffffff;"><div style="position:relative;top:1px">1129,59</div></div>
<div class="c r" style="left:661px;top:512px;width:69px;height:28px;background:#ffffff;"><div style="position:relative;top:1px"></div></div>
<div class="c r" style="left:731px;top:512px;width:68px;height:28px;background:#ffffff;"><div style="position:relative;top:1px"></div></div>
<div class="c r" style="left:800px;top:512px;width:80px;height:28px;background:#ffffff;"><div style="position:relative;top:1px"></div></div>
<div class="c r" style="left:881px;top:512px;width:77px;height:28px;background:#ffffff;"><div style="position:relative;top:1px"></div></div>
<div class="c r" style="left:959px;top:512px;width:95px;height:28px;background:#ffffff;"><div style="position:relative;top:1px">1090,5206</div></div>
<div class="c r" style="left:1055px;top:512px;width:37px;height:28px;background:#ffffff;"><div style="position:relative;top:1px"></div></div>
<div class="c r" style="left:1093px;top:512px;width:28px;height:28px;background:#ffffff;"><div style="position:relative;top:1px"></div></div>
<div class="c r" style="left:1122px;top:512px;width:123px;height:28px;background:#ffffff;"><div style="position:relative;top:1px">1090,5206</div></div>
<div class="c " style="left:12px;top:541px;width:302px;height:46px;background:#f9f000;"><div style="position:relative;top:1px"><span style="letter-spacing:-0.037px">"HP № 11 Печатающая головка,</span><br><span style="letter-spacing:-0.133px">пурпурная HP-C4812A</span></div></div>
<div class="c r" style="left:315px;top:541px;width:46px;height:46px;background:#f9f000;"><div style="position:relative;top:1px"></div></div>
<div class="c r" style="left:362px;top:541px;width:54px;height:46px;background:#f9f000;"><div style="position:relative;top:1px"></div></div>
<div class="c r" style="left:417px;top:541px;width:76px;height:46px;background:#f9f000;"><div style="position:relative;top:1px"></div></div>
<div class="c r" style="left:494px;top:541px;width:78px;height:46px;background:#f9f000;"><div style="position:relative;top:1px"></div></div>
<div class="c r" style="left:573px;top:541px;width:87px;height:46px;background:#f9f000;"><div style="position:relative;top:1px"></div></div>
<div class="c r" style="left:661px;top:541px;width:69px;height:46px;background:#f9f000;"><div style="position:relative;top:1px"></div></div>
<div class="c r" style="left:731px;top:541px;width:68px;height:46px;background:#f9f000;"><div style="position:relative;top:1px"></div></div>
<div class="c r" style="left:800px;top:541px;width:80px;height:46px;background:#f9f000;"><div style="position:relative;top:1px"></div></div>
<div class="c r" style="left:881px;top:541px;width:77px;height:46px;background:#f9f000;"><div style="position:relative;top:1px"></div></div>
<div class="c r" style="left:959px;top:541px;width:95px;height:46px;background:#f9f000;"><div style="position:relative;top:1px"></div></div>
<div class="c r" style="left:1055px;top:541px;width:37px;height:46px;background:#f9f000;"><div style="position:relative;top:1px"></div></div>
<div class="c r" style="left:1093px;top:541px;width:28px;height:46px;background:#f9f000;"><div style="position:relative;top:1px"></div></div>
<div class="c r" style="left:1122px;top:541px;width:123px;height:46px;background:#f9f000;"><div style="position:relative;top:1px"></div></div>
<div class="c " style="left:12px;top:588px;width:302px;height:28px;background:#ffffff;"><div style="position:relative;top:1px">"</div></div>
<div class="c r" style="left:315px;top:588px;width:46px;height:28px;background:#ffffff;"><div style="position:relative;top:1px">1</div></div>
<div class="c r" style="left:362px;top:588px;width:54px;height:28px;background:#ffffff;"><div style="position:relative;top:1px">1</div></div>
<div class="c r" style="left:417px;top:588px;width:76px;height:28px;background:#ffffff;"><div style="position:relative;top:1px"></div></div>
<div class="c r" style="left:494px;top:588px;width:78px;height:28px;background:#ffffff;"><div style="position:relative;top:1px">1176</div></div>
<div class="c r" style="left:573px;top:588px;width:87px;height:28px;background:#ffffff;"><div style="position:relative;top:1px">1129,59</div></div>
<div class="c r" style="left:661px;top:588px;width:69px;height:28px;background:#ffffff;"><div style="position:relative;top:1px"></div></div>
<div class="c r" style="left:731px;top:588px;width:68px;height:28px;background:#ffffff;"><div style="position:relative;top:1px"></div></div>
<div class="c r" style="left:800px;top:588px;width:80px;height:28px;background:#ffffff;"><div style="position:relative;top:1px"></div></div>
<div class="c r" style="left:881px;top:588px;width:77px;height:28px;background:#ffffff;"><div style="position:relative;top:1px"></div></div>
<div class="c r" style="left:959px;top:588px;width:95px;height:28px;background:#ffffff;"><div style="position:relative;top:1px">1090,5206</div></div>
<div class="c r" style="left:1055px;top:588px;width:37px;height:28px;background:#ffffff;"><div style="position:relative;top:1px"></div></div>
<div class="c r" style="left:1093px;top:588px;width:28px;height:28px;background:#ffffff;"><div style="position:relative;top:1px"></div></div>
<div class="c r" style="left:1122px;top:588px;width:123px;height:28px;background:#ffffff;"><div style="position:relative;top:1px">1090,5206</div></div>
<div class="c " style="left:12px;top:617px;width:302px;height:46px;background:#f9f000;"><div style="position:relative;top:1px"><span style="letter-spacing:-0.079px">"HP № 11 Печатающая головка, черная</span><br><span style="letter-spacing:0.100px">HP-C4810A</span></div></div>
<div class="c r" style="left:315px;top:617px;width:46px;height:46px;background:#f9f000;"><div style="position:relative;top:1px"></div></div>
<div class="c r" style="left:362px;top:617px;width:54px;height:46px;background:#f9f000;"><div style="position:relative;top:1px"></div></div>
<div class="c r" style="left:417px;top:617px;width:76px;height:46px;background:#f9f000;"><div style="position:relative;top:1px"></div></div>
<div class="c r" style="left:494px;top:617px;width:78px;height:46px;background:#f9f000;"><div style="position:relative;top:1px"></div></div>
<div class="c r" style="left:573px;top:617px;width:87px;height:46px;background:#f9f000;"><div style="position:relative;top:1px"></div></div>
<div class="c r" style="left:661px;top:617px;width:69px;height:46px;background:#f9f000;"><div style="position:relative;top:1px"></div></div>
<div class="c r" style="left:731px;top:617px;width:68px;height:46px;background:#f9f000;"><div style="position:relative;top:1px"></div></div>
<div class="c r" style="left:800px;top:617px;width:80px;height:46px;background:#f9f000;"><div style="position:relative;top:1px"></div></div>
<div class="c r" style="left:881px;top:617px;width:77px;height:46px;background:#f9f000;"><div style="position:relative;top:1px"></div></div>
<div class="c r" style="left:959px;top:617px;width:95px;height:46px;background:#f9f000;"><div style="position:relative;top:1px"></div></div>
<div class="c r" style="left:1055px;top:617px;width:37px;height:46px;background:#f9f000;"><div style="position:relative;top:1px"></div></div>
<div class="c r" style="left:1093px;top:617px;width:28px;height:46px;background:#f9f000;"><div style="position:relative;top:1px"></div></div>
<div class="c r" style="left:1122px;top:617px;width:123px;height:46px;background:#f9f000;"><div style="position:relative;top:1px"></div></div>
<div class="c " style="left:12px;top:664px;width:302px;height:28px;background:#ffffff;"><div style="position:relative;top:1px">"</div></div>
<div class="c r" style="left:315px;top:664px;width:46px;height:28px;background:#ffffff;"><div style="position:relative;top:1px">2</div></div>
<div class="c r" style="left:362px;top:664px;width:54px;height:28px;background:#ffffff;"><div style="position:relative;top:1px">2</div></div>
<div class="c r" style="left:417px;top:664px;width:76px;height:28px;background:#ffffff;"><div style="position:relative;top:1px"></div></div>
<div class="c r" style="left:494px;top:664px;width:78px;height:28px;background:#ffffff;"><div style="position:relative;top:1px">1176</div></div>
<div class="c r" style="left:573px;top:664px;width:87px;height:28px;background:#ffffff;"><div style="position:relative;top:1px">1129,59</div></div>
<div class="c r" style="left:661px;top:664px;width:69px;height:28px;background:#ffffff;"><div style="position:relative;top:1px"></div></div>
<div class="c r" style="left:731px;top:664px;width:68px;height:28px;background:#ffffff;"><div style="position:relative;top:1px"></div></div>
<div class="c r" style="left:800px;top:664px;width:80px;height:28px;background:#ffffff;"><div style="position:relative;top:1px"></div></div>
<div class="c r" style="left:881px;top:664px;width:77px;height:28px;background:#ffffff;"><div style="position:relative;top:1px"></div></div>
<div class="c r" style="left:959px;top:664px;width:95px;height:28px;background:#ffffff;"><div style="position:relative;top:1px">1090,5206</div></div>
<div class="c r" style="left:1055px;top:664px;width:37px;height:28px;background:#ffffff;"><div style="position:relative;top:1px"></div></div>
<div class="c r" style="left:1093px;top:664px;width:28px;height:28px;background:#ffffff;"><div style="position:relative;top:1px"></div></div>
<div class="c r" style="left:1122px;top:664px;width:123px;height:28px;background:#ffffff;"><div style="position:relative;top:1px">1090,5206</div></div>
</div>
</body></html>
